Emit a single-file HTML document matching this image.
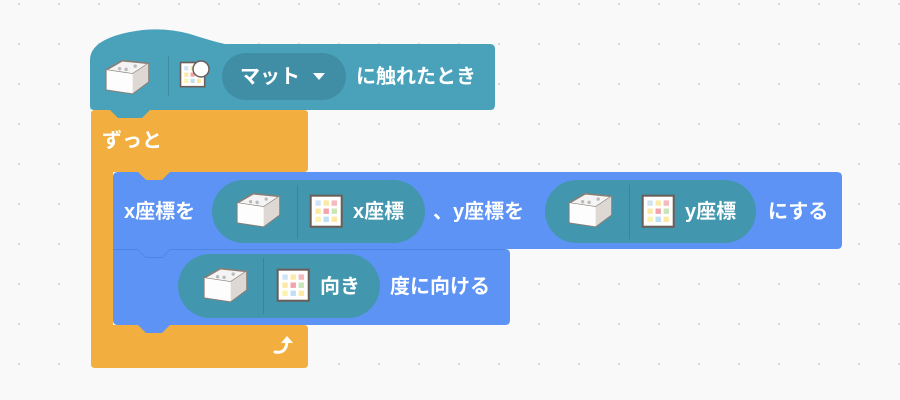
<!DOCTYPE html>
<html><head><meta charset="utf-8"><style>
body{margin:0;width:900px;height:400px;overflow:hidden;background:#f9f9f9;position:relative;
background-image:radial-gradient(circle,#d8d8d8 1px,transparent 1.3px);background-size:40px 40px;background-position:-1px -16px;
font-family:"Liberation Sans","Noto Sans CJK JP",sans-serif;}
.a{position:absolute}
.t{position:absolute;color:#fff;font-weight:bold;font-size:20px;white-space:nowrap;line-height:24px}
.pill{position:absolute;border-radius:34px;background:#4297ae}
</style></head><body>
<svg class="a" style="left:0;top:0" width="900" height="400">
<defs>
<g id="cube">
<path d="M2 10 L14 3 L34 5 L34 19 L22 28 L2 25 Z" fill="#fff" stroke="#8a7e76" stroke-width="1.5"/>
<path d="M2 10 L14 3 L34 5 L22 13 Z" fill="#f4f4f4" stroke="#8a7e76" stroke-width="1"/>
<path d="M22 13 L34 5 L34 19 L22 28 Z" fill="#ddd8d4"/>
<path d="M2 10 L22 13 L22 28 L2 25 Z" fill="#fdfdfd"/>
<circle cx="12" cy="9" r="1.3" fill="#bbb"/><circle cx="17" cy="9.5" r="1.3" fill="#bbb"/><circle cx="24" cy="7" r="1.3" fill="#bbb"/>
</g>
<g id="mat">
<rect x="0.5" y="0.5" width="23" height="23" fill="#fff" stroke="#6b5d58" stroke-width="1.5"/>
<rect x="4" y="4" width="4" height="4" fill="#cfe4f5"/><rect x="10" y="4" width="4" height="4" fill="#fbe9a5"/><rect x="16" y="4" width="4" height="4" fill="#f6b9bd"/>
<rect x="4" y="10" width="4" height="4" fill="#fbe9a5"/><rect x="10" y="10" width="4" height="4" fill="#f3a4aa"/><rect x="16" y="10" width="4" height="4" fill="#c9e6b6"/>
<rect x="4" y="16" width="4" height="4" fill="#fdf3b0"/><rect x="10" y="16" width="4" height="4" fill="#bfe0f4"/><rect x="16" y="16" width="4" height="4" fill="#fbe9a5"/>
</g>
</defs>
<!-- forever orange -->
<path d="M91 114 Q91 110 95 110 L304 110 Q308 110 308 114 L308 168 Q308 172 304 172 L113 172 L113 325 L304 325 Q308 325 308 329 L308 364 Q308 368 304 368 L95 368 Q91 368 91 364 Z" fill="#f2ae3f"/>
<!-- hat -->
<path d="M90 60 Q90 40 130 32 Q160 26 190 34 Q215 42 225 44 L490 44 Q495 44 495 49 L495 105 Q495 110 490 110 L150 110 L142 118 L118 118 L110 110 L94 110 Q90 110 90 106 Z" fill="#4aa2ba"/>
<!-- blue 1 -->
<path d="M113 177 Q113 172 118 172 L837 172 Q842 172 842 177 L842 244 Q842 249 837 249 L170 249 L162 257 L146 257 L138 249 L113 249 Z" fill="#5c93f5"/>
<!-- orange notch into blue1 -->
<path d="M138 172 L146 180 L162 180 L170 172 Z" fill="#f2ae3f"/>
<!-- blue 2 -->
<path d="M113 249 L138 249 L146 257 L162 257 L170 249 L505 249 Q510 249 510 254 L510 320 Q510 325 505 325 L170 325 L162 333 L146 333 L138 325 L118 325 Q113 325 113 320 Z" fill="#5c93f5"/>
<path d="M113 249.5 L138 249.5 L146 257.5 L162 257.5 L170 249.5 L505 249.5" fill="none" stroke="#4f84e0" stroke-width="1"/>
<path d="M138 249 L146 257 L162 257 L170 249 Z" fill="#5c93f5"/>
<g transform="translate(104,57) scale(1.3)"><use href="#cube"/></g>
<rect x="168" y="56" width="1" height="40" fill="rgba(0,0,0,0.12)"/>
<g transform="translate(180,62) scale(1.05)"><use href="#mat"/></g>
<circle cx="201" cy="69" r="8" fill="#fff" stroke="#6b5d58" stroke-width="1.5"/>
<path d="M275 352 Q286 354 287 342" fill="none" stroke="#fff" stroke-width="3" stroke-linecap="round"/>
<path d="M281 343 L287 336 L293 343 Z" fill="#fff"/>
</svg>
<div class="pill" style="left:222px;top:53px;width:124px;height:47px;background:#3f8ea6"></div>
<div class="t" style="left:240px;top:65px">マット</div>
<svg class="a" style="left:313px;top:73px" width="12" height="8"><path d="M0 0 L12 0 L6 7 Z" fill="#fff"/></svg>
<div class="t" style="left:356px;top:65px">に触れたとき</div>
<div class="t" style="left:102px;top:129px">ずっと</div>

<div class="pill" style="left:212px;top:180px;width:213px;height:63px"></div>
<div class="pill" style="left:545px;top:180px;width:211px;height:63px"></div>
<div class="pill" style="left:178px;top:254px;width:202px;height:64px"></div>
<div class="t" style="left:124px;top:200px">x座標を</div>
<div class="t" style="left:353px;top:200px">x座標</div>
<div class="t" style="left:433px;top:200px">、y座標を</div>
<div class="t" style="left:685px;top:200px">y座標</div>
<div class="t" style="left:768px;top:200px">にする</div>
<div class="t" style="left:320px;top:275px">向き</div>
<div class="t" style="left:390px;top:275px">度に向ける</div>
<svg class="a" style="left:0;top:0" width="900" height="400">
<g transform="translate(235,190) scale(1.3)"><use href="#cube"/></g><rect x="297" y="185" width="1" height="54" fill="rgba(0,0,0,0.12)"/><g transform="translate(310,195) scale(1.35)"><use href="#mat"/></g>
<g transform="translate(567,190) scale(1.3)"><use href="#cube"/></g><rect x="629" y="185" width="1" height="54" fill="rgba(0,0,0,0.12)"/><g transform="translate(642,195) scale(1.35)"><use href="#mat"/></g>
<g transform="translate(202,265) scale(1.3)"><use href="#cube"/></g><rect x="263" y="258" width="1" height="56" fill="rgba(0,0,0,0.12)"/><g transform="translate(277,269) scale(1.35)"><use href="#mat"/></g>
</svg>
</body></html>
